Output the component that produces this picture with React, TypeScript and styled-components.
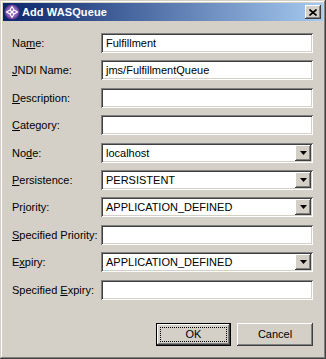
import React from 'react';
import styled, {createGlobalStyle, css} from 'styled-components';

const Global = createGlobalStyle`
	html, body {
		margin: 0;
		padding: 0;
		background: #d4d0c8;
	}
	* {
		box-sizing: border-box;
	}
`;

const face = '#d4d0c8';

const raised = css`
	box-shadow:
		inset -1px -1px 0 #404040,
		inset 1px 1px 0 #ffffff,
		inset -2px -2px 0 #808080,
		inset 2px 2px 0 ${face};
`;

const sunken = css`
	box-shadow:
		inset 1px 1px 0 #808080,
		inset -1px -1px 0 #ffffff,
		inset 2px 2px 0 #404040,
		inset -2px -2px 0 ${face};
`;

const Window = styled.div`
	width: 326px;
	height: 359px;
	padding: 3px;
	background: ${face};
	font-family: 'Liberation Sans', Arial, sans-serif;
	font-size: 11px;
	color: #000;
	display: flex;
	flex-direction: column;
	box-shadow:
		inset -1px -1px 0 #404040,
		inset 1px 1px 0 ${face},
		inset -2px -2px 0 #808080,
		inset 2px 2px 0 #ffffff;
`;

const TitleBar = styled.div`
	height: 18px;
	display: flex;
	align-items: center;
	padding: 0 2px 0 1px;
	gap: 2px;
	background: linear-gradient(to right, #0a246a, #a6caf0);
	color: #fff;
	font-weight: bold;
	font-size: 11px;
`;

const TitleText = styled.span`
	flex: 1;
	letter-spacing: 0.1px;
`;

const CloseButton = styled.div`
	width: 16px;
	height: 14px;
	background: ${face};
	${raised};
	display: flex;
	align-items: center;
	justify-content: center;
`;

const Body = styled.div`
	flex: 1;
	display: flex;
	flex-direction: column;
	padding: 12px 10px 0 9px;
`;

const Form = styled.div`
	display: grid;
	grid-template-columns: 89px 212px;
	row-gap: 7.4px;
	align-items: center;
`;

const Label = styled.label`
	white-space: nowrap;
`;

const Key = styled.u`
	text-decoration: underline;
	text-underline-offset: 1px;
`;

const Field = styled.div`
	height: 20px;
	background: #fff;
	${sunken};
	display: flex;
	align-items: center;
	padding: 0 2px 0 5px;
	white-space: nowrap;
	overflow: hidden;
`;

const Value = styled.span`
	flex: 1;
`;

const DropButton = styled.div`
	width: 16px;
	height: 16px;
	background: ${face};
	${raised};
	display: flex;
	align-items: center;
	justify-content: center;
`;

const Buttons = styled.div`
	display: flex;
	justify-content: flex-end;
	gap: 6px;
	margin-top: 23px;
`;

const Button = styled.div<{$default?: boolean}>`
	width: ${(p) => (p.$default ? 75 : 76)}px;
	height: 23px;
	background: ${face};
	display: flex;
	align-items: center;
	justify-content: center;
	position: relative;
	${(p) =>
		p.$default
			? css`
					box-shadow:
						inset 0 0 0 1px #000,
						inset -2px -2px 0 #404040,
						inset 2px 2px 0 #ffffff,
						inset -3px -3px 0 #808080;
			  `
			: raised};
`;

const Focus = styled.span`
	position: absolute;
	inset: 4px;
	border: 1px dotted #000;
`;

const Arrow = () => (
	<svg width="7" height="4" viewBox="0 0 7 4">
		<path d="M0 0h7L3.5 4z" fill="#000" />
	</svg>
);

const AppIcon = () => (
	<svg width="16" height="16" viewBox="0 0 16 16">
		<circle cx="8" cy="8" r="7.5" fill="#6a3d96" />
		<circle cx="8" cy="8" r="6" fill="#8d62b8" />
		<path d="M8 2.5l2 3.5-2 2-2-2z M8 13.5l2-3.5-2-2-2 2z M2.5 8l3.5-2 2 2-2 2z M13.5 8l-3.5-2-2 2 2 2z" fill="none" stroke="#fff" strokeWidth="1.1" />
		<circle cx="8" cy="8" r="1.2" fill="#fff" />
	</svg>
);

const CloseGlyph = () => (
	<svg width="8" height="7" viewBox="0 0 8 7">
		<path d="M0.5 0.5l7 6M7.5 0.5l-7 6" stroke="#000" strokeWidth="1.6" />
	</svg>
);

type Row = {
	label: React.ReactNode;
	value?: string;
	combo?: boolean;
};

const rows: Row[] = [
	{label: <>Na<Key>m</Key>e:</>, value: 'Fulfillment'},
	{label: <><Key>J</Key>NDI Name:</>, value: 'jms/FulfillmentQueue'},
	{label: <><Key>D</Key>escription:</>},
	{label: <><Key>C</Key>ategory:</>},
	{label: <>No<Key>d</Key>e:</>, value: 'localhost', combo: true},
	{label: <><Key>P</Key>ersistence:</>, value: 'PERSISTENT', combo: true},
	{label: <>Pr<Key>i</Key>ority:</>, value: 'APPLICATION_DEFINED', combo: true},
	{label: <><Key>S</Key>pecified Priority:</>},
	{label: <>E<Key>x</Key>piry:</>, value: 'APPLICATION_DEFINED', combo: true},
	{label: <>Specified <Key>E</Key>xpiry:</>},
];

export default function App() {
	return (
		<>
			<Global />
			<Window>
				<TitleBar>
					<AppIcon />
					<TitleText>Add WASQueue</TitleText>
					<CloseButton>
						<CloseGlyph />
					</CloseButton>
				</TitleBar>
				<Body>
					<Form>
						{rows.map((r, i) => (
							<React.Fragment key={i}>
								<Label>{r.label}</Label>
								<Field>
									<Value>{r.value}</Value>
									{r.combo && (
										<DropButton>
											<Arrow />
										</DropButton>
									)}
								</Field>
							</React.Fragment>
						))}
					</Form>
					<Buttons>
						<Button $default>
							<Focus />
							OK
						</Button>
						<Button>Cancel</Button>
					</Buttons>
				</Body>
			</Window>
		</>
	);
}
